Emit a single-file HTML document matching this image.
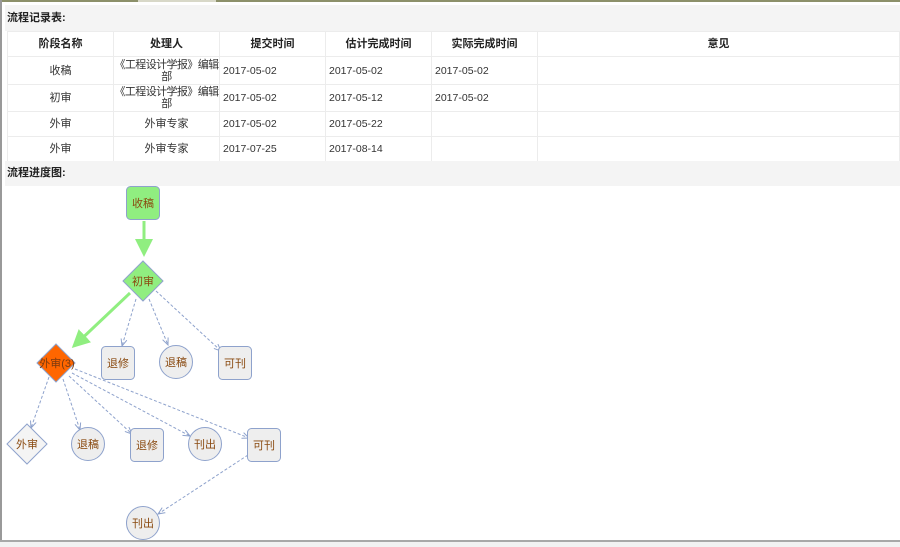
<!DOCTYPE html>
<html><head><meta charset="utf-8"><style>
*{margin:0;padding:0;box-sizing:border-box}
body{width:900px;height:547px;background:#fff;font-family:"Liberation Sans","Noto Sans CJK SC",sans-serif;font-size:11px;color:#333;position:relative;overflow:hidden}
.topline{position:absolute;left:0;top:0;width:900px;height:2px;background:#8c906a}
.topline2{position:absolute;left:138px;top:0;width:78px;height:2px;background:#d8d8c8}
.lb{position:absolute;left:0;top:0;width:2px;height:541px;background:#999}
.bar{position:absolute;left:5px;right:0;background:#f4f4f4;font-weight:bold;font-size:11px;padding-left:2px;color:#222}
table{position:absolute;left:7px;top:31px;width:893px;border-collapse:collapse;background:#fff}
td,th{border:1px solid #ececec;text-align:center;font-size:11px;padding:0;line-height:12px}
th{height:25px;font-weight:bold;color:#222}
td.d{text-align:left;padding-left:3px;font-size:10.5px}
td.n{white-space:nowrap;letter-spacing:-0.6px}
.bot{position:absolute;left:0;top:540px;width:900px;height:2px;background:#a8a8a8}
.bot2{position:absolute;left:0;top:542px;width:900px;height:5px;background:#f2f2f2}
svg{position:absolute;left:0;top:0}
svg text{font-family:"Liberation Sans","Noto Sans CJK SC",sans-serif;font-size:11px;fill:#8a4a10;text-anchor:middle}
</style></head><body>
<div class="topline"></div><div class="topline2"></div>
<div class="bar" style="top:5px;height:26px;line-height:26px">流程记录表:</div>
<table>
<tr><th style="width:106px">阶段名称</th><th style="width:106px">处理人</th><th style="width:106px">提交时间</th><th style="width:106px">估计完成时间</th><th style="width:106px">实际完成时间</th><th>意见</th></tr>
<tr style="height:28px"><td>收稿</td><td class="n">《工程设计学报》编辑<br>部</td><td class="d">2017-05-02</td><td class="d">2017-05-02</td><td class="d">2017-05-02</td><td></td></tr>
<tr style="height:27px"><td>初审</td><td class="n">《工程设计学报》编辑<br>部</td><td class="d">2017-05-02</td><td class="d">2017-05-12</td><td class="d">2017-05-02</td><td></td></tr>
<tr style="height:25px"><td>外审</td><td>外审专家</td><td class="d">2017-05-02</td><td class="d">2017-05-22</td><td></td><td></td></tr>
<tr style="height:25px"><td>外审</td><td>外审专家</td><td class="d">2017-07-25</td><td class="d">2017-08-14</td><td></td><td></td></tr>
</table>
<div class="bar" style="top:161px;height:25px;line-height:25px">流程进度图:</div>
<div class="lb"></div>
<svg width="900" height="547">
<defs>
<marker id="ag" markerWidth="6" markerHeight="6" refX="5" refY="3" orient="auto"><path d="M0,0L6,3L0,6z" fill="#90ee80"/></marker>
<marker id="ab" markerWidth="8" markerHeight="8" refX="7" refY="4" orient="auto"><path d="M0,1L7,4L0,7" fill="none" stroke="#8ea2cc" stroke-width="1"/></marker>
</defs>
<g stroke="#8ea2cc" stroke-width="1" stroke-dasharray="3,2" fill="none" marker-end="url(#ab)">
<path d="M136,299L122,346"/><path d="M149,299L168,345"/><path d="M156,291L221,351"/>
<path d="M49,377L31,428"/><path d="M63,379L80,430"/><path d="M69,376L132,434"/><path d="M72,373L190,436"/><path d="M75,369L249,438"/>
<path d="M248,455L158,514"/>
</g>
<path d="M144,221L144,254" stroke="#90ee80" stroke-width="3" marker-end="url(#ag)"/>
<path d="M130,293L74,346" stroke="#90ee80" stroke-width="3" marker-end="url(#ag)"/>
<rect x="126.5" y="186.5" width="33" height="33" rx="4" fill="#90ee80" stroke="#8ea2cc"/>
<text x="143" y="207">收稿</text>
<path d="M143,261L163,281L143,301L123,281z" fill="#90ee80" stroke="#8ea2cc"/>
<text x="143" y="285">初审</text>
<path d="M56,344L75,363L56,382L37,363z" fill="#ff6600" stroke="#8ea2cc"/>
<text x="57" y="367" style="fill:#7a3a10">外审(3)</text>
<rect x="101.5" y="346.5" width="33" height="33" rx="4" fill="#eeeeee" stroke="#8ea2cc"/><text x="118" y="367">退修</text>
<circle cx="176" cy="362" r="16.5" fill="#eeeeee" stroke="#8ea2cc"/><text x="176" y="366">退稿</text>
<rect x="218.5" y="346.5" width="33" height="33" rx="4" fill="#eeeeee" stroke="#8ea2cc"/><text x="235" y="367">可刊</text>
<path d="M27,424L47,444L27,464L7,444z" fill="#f4f4f4" stroke="#8ea2cc"/><text x="27" y="448">外审</text>
<circle cx="88" cy="444" r="16.5" fill="#eeeeee" stroke="#8ea2cc"/><text x="88" y="448">退稿</text>
<rect x="130.5" y="428.5" width="33" height="33" rx="4" fill="#eeeeee" stroke="#8ea2cc"/><text x="147" y="449">退修</text>
<circle cx="205" cy="444" r="16.5" fill="#eeeeee" stroke="#8ea2cc"/><text x="205" y="448">刊出</text>
<rect x="247.5" y="428.5" width="33" height="33" rx="4" fill="#eeeeee" stroke="#8ea2cc"/><text x="264" y="449">可刊</text>
<circle cx="143" cy="523" r="16.5" fill="#eeeeee" stroke="#8ea2cc"/><text x="143" y="527">刊出</text>
</svg>
<div class="bot"></div><div class="bot2"></div>
</body></html>
